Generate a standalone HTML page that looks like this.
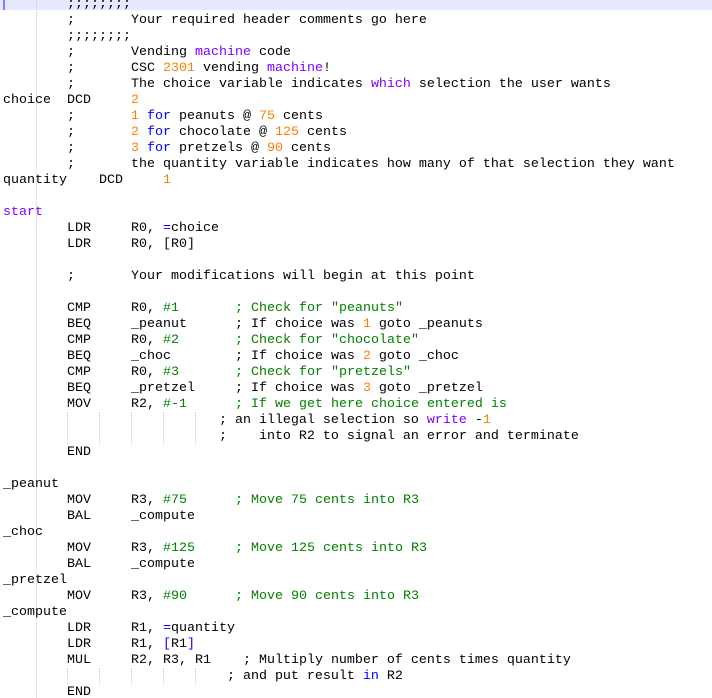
<!DOCTYPE html>
<html><head><meta charset="utf-8"><style>
html,body{margin:0;padding:0;background:#fff;width:712px;height:698px;overflow:hidden;position:relative}
pre{position:absolute;left:3px;top:-3px;margin:0;font-family:"Liberation Mono",monospace;font-size:13.33px;line-height:16px;color:#000;tab-size:8;-moz-tab-size:8}
.hl{position:absolute;left:0;top:0;width:712px;height:10px;background:#e8e8ff}
.bar{position:absolute;left:3px;top:0;width:2px;height:10px;background:#8080ff}
.vg{position:absolute;left:36px;top:0;height:698px;border-left:1px dotted #ccc}
.g{position:absolute;border-left:1px dotted #c8c8c8}
.n{color:#ff8000}.k{color:#0000ff}.p{color:#8000ff}.c{color:#008000}
</style></head><body>
<div class="hl"></div><div class="bar"></div><div class="vg"></div>
<div class="g" style="left:67px;top:412px;height:32px"></div>
<div class="g" style="left:99px;top:412px;height:32px"></div>
<div class="g" style="left:131px;top:412px;height:32px"></div>
<div class="g" style="left:163px;top:412px;height:32px"></div>
<div class="g" style="left:195px;top:412px;height:32px"></div>
<div class="g" style="left:67px;top:668px;height:16px"></div>
<div class="g" style="left:99px;top:668px;height:16px"></div>
<div class="g" style="left:131px;top:668px;height:16px"></div>
<div class="g" style="left:163px;top:668px;height:16px"></div>
<div class="g" style="left:195px;top:668px;height:16px"></div>
<pre>	;;;;;;;;
	;	Your required header comments go here
	;;;;;;;;
	;	Vending <span class="p">machine</span> code
	;	CSC <span class="n">2301</span> vending <span class="p">machine</span>!
	;	The choice variable indicates <span class="p">which</span> selection the user wants
choice	DCD	<span class="n">2</span>
	;	<span class="n">1</span> <span class="k">for</span> peanuts @ <span class="n">75</span> cents
	;	<span class="n">2</span> <span class="k">for</span> chocolate @ <span class="n">125</span> cents
	;	<span class="n">3</span> <span class="k">for</span> pretzels @ <span class="n">90</span> cents
	;	the quantity variable indicates how many of that selection they want
quantity    DCD     <span class="n">1</span>

<span class="p">start</span>
	LDR	R0, <span class="k">=</span>choice
	LDR	R0, [R0]

	;	Your modifications will begin at this point

	CMP	R0, <span class="c">#1</span>       <span class="c">; Check for "peanuts"</span>
	BEQ	_peanut      ; If choice was <span class="n">1</span> goto _peanuts
	CMP	R0, <span class="c">#2</span>       <span class="c">; Check for "chocolate"</span>
	BEQ	_choc        ; If choice was <span class="n">2</span> goto _choc
	CMP	R0, <span class="c">#3</span>       <span class="c">; Check for "pretzels"</span>
	BEQ	_pretzel     ; If choice was <span class="n">3</span> goto _pretzel
	MOV	R2, <span class="c">#-1</span>      <span class="c">; If we get here choice entered is</span>
                           ; an illegal selection so <span class="p">write</span> -<span class="n">1</span>
                           ;    into R2 to signal an error and terminate
	END

_peanut
	MOV	R3, <span class="c">#75</span>      <span class="c">; Move 75 cents into R3</span>
	BAL	_compute
_choc
	MOV	R3, <span class="c">#125</span>     <span class="c">; Move 125 cents into R3</span>
	BAL	_compute
_pretzel
	MOV	R3, <span class="c">#90</span>      <span class="c">; Move 90 cents into R3</span>
_compute
	LDR	R1, <span class="k">=</span>quantity
	LDR	R1, <span class="k">[</span>R1<span class="k">]</span>
	MUL	R2, R3, R1    ; Multiply number of cents times quantity
                            ; and put result <span class="k">in</span> R2
	END
</pre>
</body></html>
